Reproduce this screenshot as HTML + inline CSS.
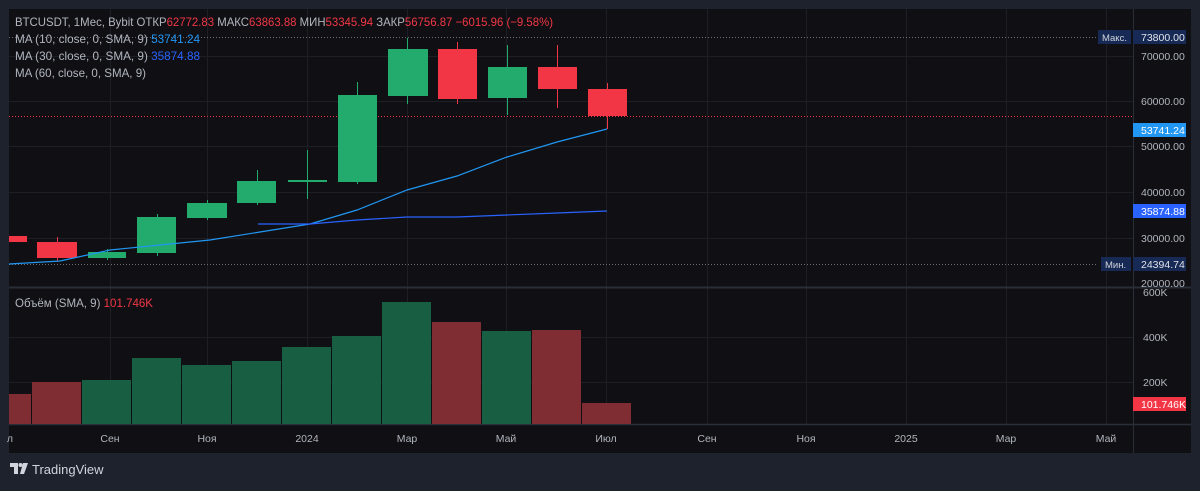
<!DOCTYPE html>
<html><head><meta charset="utf-8"><style>
body{margin:0;background:#1e222d;width:1200px;height:486px;overflow:hidden;font-family:"Liberation Sans",sans-serif}
</style></head><body>
<svg width="1200" height="486" xmlns="http://www.w3.org/2000/svg" font-family="Liberation Sans, sans-serif">
<rect x="0" y="0" width="1200" height="486" fill="#1e222d"/>
<rect x="9" y="9" width="1182" height="444" fill="#101014"/>
<g stroke="#1e1f26" stroke-width="1">
<line x1="9" y1="56.5" x2="1133" y2="56.5"/><line x1="9" y1="101.5" x2="1133" y2="101.5"/><line x1="9" y1="146.5" x2="1133" y2="146.5"/><line x1="9" y1="192.5" x2="1133" y2="192.5"/><line x1="9" y1="238.5" x2="1133" y2="238.5"/>
<line x1="9" y1="337.5" x2="1133" y2="337.5"/><line x1="9" y1="382.5" x2="1133" y2="382.5"/>
<line x1="110.5" y1="9" x2="110.5" y2="424"/><line x1="207.5" y1="9" x2="207.5" y2="424"/><line x1="307.5" y1="9" x2="307.5" y2="424"/><line x1="407.5" y1="9" x2="407.5" y2="424"/><line x1="506.5" y1="9" x2="506.5" y2="424"/><line x1="606.5" y1="9" x2="606.5" y2="424"/><line x1="707.5" y1="9" x2="707.5" y2="424"/><line x1="806.5" y1="9" x2="806.5" y2="424"/><line x1="906.5" y1="9" x2="906.5" y2="424"/><line x1="1006.5" y1="9" x2="1006.5" y2="424"/><line x1="1106.5" y1="9" x2="1106.5" y2="424"/>
</g>
<line x1="9" y1="287.5" x2="1191" y2="287.5" stroke="#2a2e39" stroke-width="2"/>
<line x1="9" y1="424.5" x2="1191" y2="424.5" stroke="#2a2e39" stroke-width="1.5"/>
<line x1="1133.5" y1="9" x2="1133.5" y2="453" stroke="#2a2e39"/>
<line x1="9" y1="37.5" x2="1098" y2="37.5" stroke="#6a6d78" stroke-dasharray="1,2"/>
<line x1="9" y1="264.5" x2="1098" y2="264.5" stroke="#6a6d78" stroke-dasharray="1,2"/>
<line x1="9" y1="116.5" x2="1133" y2="116.5" stroke="#f23645" stroke-dasharray="1,2"/>
<g stroke-width="1">
<rect x="9" y="236" width="18" height="6" fill="#f23645"/>
<line x1="57.5" y1="237" x2="57.5" y2="262" stroke="#f23645"/><rect x="37" y="242" width="40" height="16" fill="#f23645"/>
<line x1="107.5" y1="249" x2="107.5" y2="260" stroke="#22ab6c"/><rect x="88" y="252" width="38" height="6" fill="#22ab6c"/>
<line x1="157.5" y1="214" x2="157.5" y2="256" stroke="#22ab6c"/><rect x="137" y="217" width="39" height="36" fill="#22ab6c"/>
<line x1="207.5" y1="200" x2="207.5" y2="220" stroke="#22ab6c"/><rect x="187" y="203" width="40" height="15" fill="#22ab6c"/>
<line x1="257.5" y1="170" x2="257.5" y2="205" stroke="#22ab6c"/><rect x="237" y="181" width="39" height="22" fill="#22ab6c"/>
<line x1="307.5" y1="150" x2="307.5" y2="199" stroke="#22ab6c"/><rect x="288" y="180" width="39" height="2" fill="#22ab6c"/>
<line x1="357.5" y1="82" x2="357.5" y2="184" stroke="#22ab6c"/><rect x="338" y="95" width="39" height="87" fill="#22ab6c"/>
<line x1="407.5" y1="38" x2="407.5" y2="104" stroke="#22ab6c"/><rect x="388" y="49" width="40" height="47" fill="#22ab6c"/>
<line x1="457.5" y1="42" x2="457.5" y2="104" stroke="#f23645"/><rect x="438" y="49" width="39" height="50" fill="#f23645"/>
<line x1="507.5" y1="45" x2="507.5" y2="115" stroke="#22ab6c"/><rect x="488" y="67" width="39" height="31" fill="#22ab6c"/>
<line x1="557.5" y1="45" x2="557.5" y2="108" stroke="#f23645"/><rect x="538" y="67" width="39" height="22" fill="#f23645"/>
<line x1="607.5" y1="83" x2="607.5" y2="129" stroke="#f23645"/><rect x="588" y="89" width="39" height="27" fill="#f23645"/>
</g>
<polyline fill="none" stroke="#2196f3" stroke-width="1.2" points="9,264 60,261 110,250 160,245 210,240 260,232 310,224 357,210 407,190 457,176 507,157 557,142 607,129"/>
<polyline fill="none" stroke="#2962ff" stroke-width="1.2" points="258,224 310,224 357,220 407,217 457,217 507,215 557,213 607,211"/>
<g>
<rect x="9" y="394" width="22" height="30" fill="#7f2c33"/>
<rect x="32" y="382" width="49" height="42" fill="#7f2c33"/>
<rect x="82" y="380" width="49" height="44" fill="#175e42"/>
<rect x="132" y="358" width="49" height="66" fill="#175e42"/>
<rect x="182" y="365" width="49" height="59" fill="#175e42"/>
<rect x="232" y="361" width="49" height="63" fill="#175e42"/>
<rect x="282" y="347" width="49" height="77" fill="#175e42"/>
<rect x="332" y="336" width="49" height="88" fill="#175e42"/>
<rect x="382" y="302" width="49" height="122" fill="#175e42"/>
<rect x="432" y="322" width="49" height="102" fill="#7f2c33"/>
<rect x="482" y="331" width="49" height="93" fill="#175e42"/>
<rect x="532" y="330" width="49" height="94" fill="#7f2c33"/>
<rect x="582" y="403" width="49" height="21" fill="#7f2c33"/>
</g>
<g font-size="12" fill="#b2b5be">
<text x="15" y="26" textLength="538" lengthAdjust="spacingAndGlyphs">BTCUSDT, 1Мес, Bybit  ОТКР<tspan fill="#f23645">62772.83</tspan>  МАКС<tspan fill="#f23645">63863.88</tspan>  МИН<tspan fill="#f23645">53345.94</tspan>  ЗАКР<tspan fill="#f23645">56756.87  −6015.96 (−9.58%)</tspan></text>
<text x="15" y="43" textLength="185" lengthAdjust="spacingAndGlyphs">MA (10, close, 0, SMA, 9)  <tspan fill="#2196f3">53741.24</tspan></text>
<text x="15" y="60" textLength="185" lengthAdjust="spacingAndGlyphs">MA (30, close, 0, SMA, 9)  <tspan fill="#2962ff">35874.88</tspan></text>
<text x="15" y="77" textLength="131" lengthAdjust="spacingAndGlyphs">MA (60, close, 0, SMA, 9)</text>
<text x="15" y="307" textLength="138" lengthAdjust="spacingAndGlyphs">Объём (SMA, 9)  <tspan fill="#f23645">101.746K</tspan></text>
</g>
<g font-size="10.5" fill="#b2b5be">
<text x="1141" y="60">70000.00</text><text x="1141" y="105">60000.00</text><text x="1141" y="150">50000.00</text><text x="1141" y="196">40000.00</text><text x="1141" y="242">30000.00</text><text x="1141" y="287">20000.00</text>
<text x="1143" y="296">600K</text><text x="1143" y="341">400K</text><text x="1143" y="386">200K</text>
</g>
<rect x="1098" y="30" width="33" height="14" fill="#172a55"/><text x="1102" y="41" font-size="9.5" fill="#d1d4dc">Макс.</text>
<rect x="1133" y="30" width="53" height="14" fill="#172a55"/><text x="1141" y="41" font-size="10.5" fill="#e0e3eb">73800.00</text>
<rect x="1133" y="123" width="53" height="14" fill="#2196f3"/><text x="1141" y="134" font-size="10.5" fill="#fff">53741.24</text>
<rect x="1133" y="204" width="53" height="14" fill="#2962ff"/><text x="1141" y="215" font-size="10.5" fill="#fff">35874.88</text>
<rect x="1101" y="257" width="30" height="14" fill="#172a55"/><text x="1105" y="268" font-size="9.5" fill="#d1d4dc">Мин.</text>
<rect x="1133" y="257" width="53" height="14" fill="#172a55"/><text x="1141" y="268" font-size="10.5" fill="#e0e3eb">24394.74</text>
<rect x="1133" y="397" width="53" height="14" fill="#f23645"/><text x="1141" y="408" font-size="10.5" fill="#fff">101.746K</text>
<g font-size="10.5" fill="#b2b5be" text-anchor="middle">
<text x="10" y="442">л</text><text x="110" y="442">Сен</text><text x="207" y="442">Ноя</text><text x="307" y="442">2024</text><text x="407" y="442">Мар</text><text x="506" y="442">Май</text><text x="606" y="442">Июл</text><text x="707" y="442">Сен</text><text x="806" y="442">Ноя</text><text x="906" y="442">2025</text><text x="1006" y="442">Мар</text><text x="1106" y="442">Май</text>
</g>
<g fill="#d1d4dc">
<path d="M10 463h8v11h-4v-7h-4z"/><circle cx="20.5" cy="465" r="2"/><path d="M23 463h5l-4 11h-4z"/>
</g>
<text x="32" y="474" font-size="13" fill="#d1d4dc">TradingView</text>
</svg>
</body></html>
